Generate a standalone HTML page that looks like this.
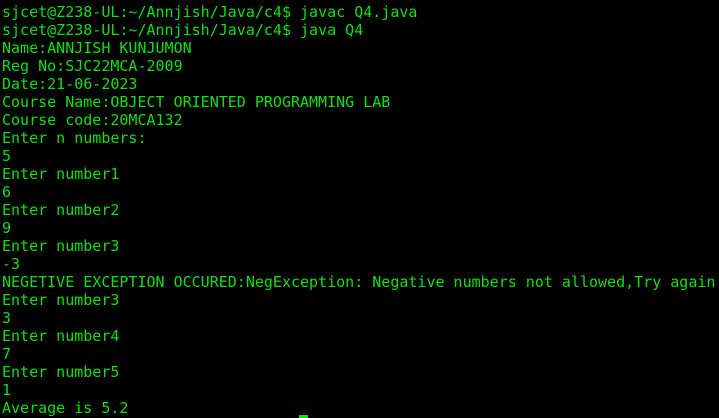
<!DOCTYPE html>
<html><head><style>
html,body{margin:0;padding:0;background:#000;width:719px;height:418px;overflow:hidden}
pre{margin:0;position:absolute;left:2px;top:3px;font-family:"DejaVu Sans Mono","Liberation Mono",monospace;font-size:15px;line-height:18px;color:#11e011}
.cur{position:absolute;left:299px;top:415px;width:9px;height:3px;background:#11e011}
</style></head><body>
<pre>sjcet@Z238-UL:~/Annjish/Java/c4$ javac Q4.java
sjcet@Z238-UL:~/Annjish/Java/c4$ java Q4
Name:ANNJISH KUNJUMON
Reg No:SJC22MCA-2009
Date:21-06-2023
Course Name:OBJECT ORIENTED PROGRAMMING LAB
Course code:20MCA132
Enter n numbers:
5
Enter number1
6
Enter number2
9
Enter number3
-3
NEGETIVE EXCEPTION OCCURED:NegException: Negative numbers not allowed,Try again
Enter number3
3
Enter number4
7
Enter number5
1
Average is 5.2</pre>
<div class="cur"></div>
</body></html>
